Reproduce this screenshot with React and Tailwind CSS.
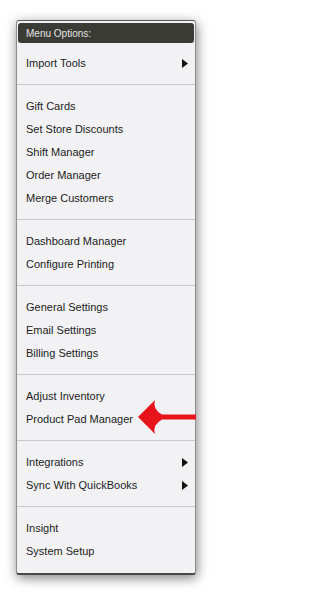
import React from "react";

const groups = [
  [{ label: "Import Tools", sub: true }],
  [
    { label: "Gift Cards" },
    { label: "Set Store Discounts" },
    { label: "Shift Manager" },
    { label: "Order Manager" },
    { label: "Merge Customers" },
  ],
  [{ label: "Dashboard Manager" }, { label: "Configure Printing" }],
  [{ label: "General Settings" }, { label: "Email Settings" }, { label: "Billing Settings" }],
  [{ label: "Adjust Inventory" }, { label: "Product Pad Manager", arrow: true }],
  [{ label: "Integrations", sub: true }, { label: "Sync With QuickBooks", sub: true }],
  [{ label: "Insight" }, { label: "System Setup" }],
];

const SubArrow = () => (
  <svg width="6" height="9" viewBox="0 0 6 9" className="shrink-0">
    <polygon points="0,0 6,4.5 0,9" fill="#111" />
  </svg>
);

const RedArrow = () => (
  <svg
    width="58"
    height="35"
    viewBox="0 0 58 35"
    className="absolute left-[121px] top-[-8px] pointer-events-none"
  >
    <path
      d="M0,17 L17,0 Q14,9 24,14.5 L58,14.5 L58,19.5 L24,19.5 Q14,25 17,34 Z"
      fill="#e8141b"
    />
  </svg>
);

const Row = ({ item }) => (
  <div className="relative flex items-center justify-between h-[23px] leading-[23px] pl-[9px] pr-[7px] text-[11px] text-[#1c1c1c]">
    <span>{item.label}</span>
    {item.sub && <SubArrow />}
    {item.arrow && <RedArrow />}
  </div>
);

export default function App() {
  return (
    <div className="min-h-[599px] bg-white pl-4 pt-5 font-['Liberation_Sans',Arial,sans-serif]">
      <div className="w-[180px] bg-[#f2f2f4] border border-[#8e8e8e] border-t-[#5c5c5c] border-b-2 border-b-[#484848] rounded-[3px] pb-[10px] shadow-[1px_3px_12px_rgba(0,0,0,0.5)]">
        <div className="mt-[2px] mx-px h-[20px] rounded-[3px] bg-[#3b3b36] pl-2 flex items-center text-[10px] text-[#e4e4e4]">
          Menu Options:
        </div>
        <div className="mt-[9px]">
          {groups.map((g, i) => (
            <div key={i}>
              {i > 0 && <div className="mt-[9px] mb-[10px] h-px bg-[#c8c8ca]" />}
              {g.map((item) => (
                <Row key={item.label} item={item} />
              ))}
            </div>
          ))}
        </div>
      </div>
    </div>
  );
}
